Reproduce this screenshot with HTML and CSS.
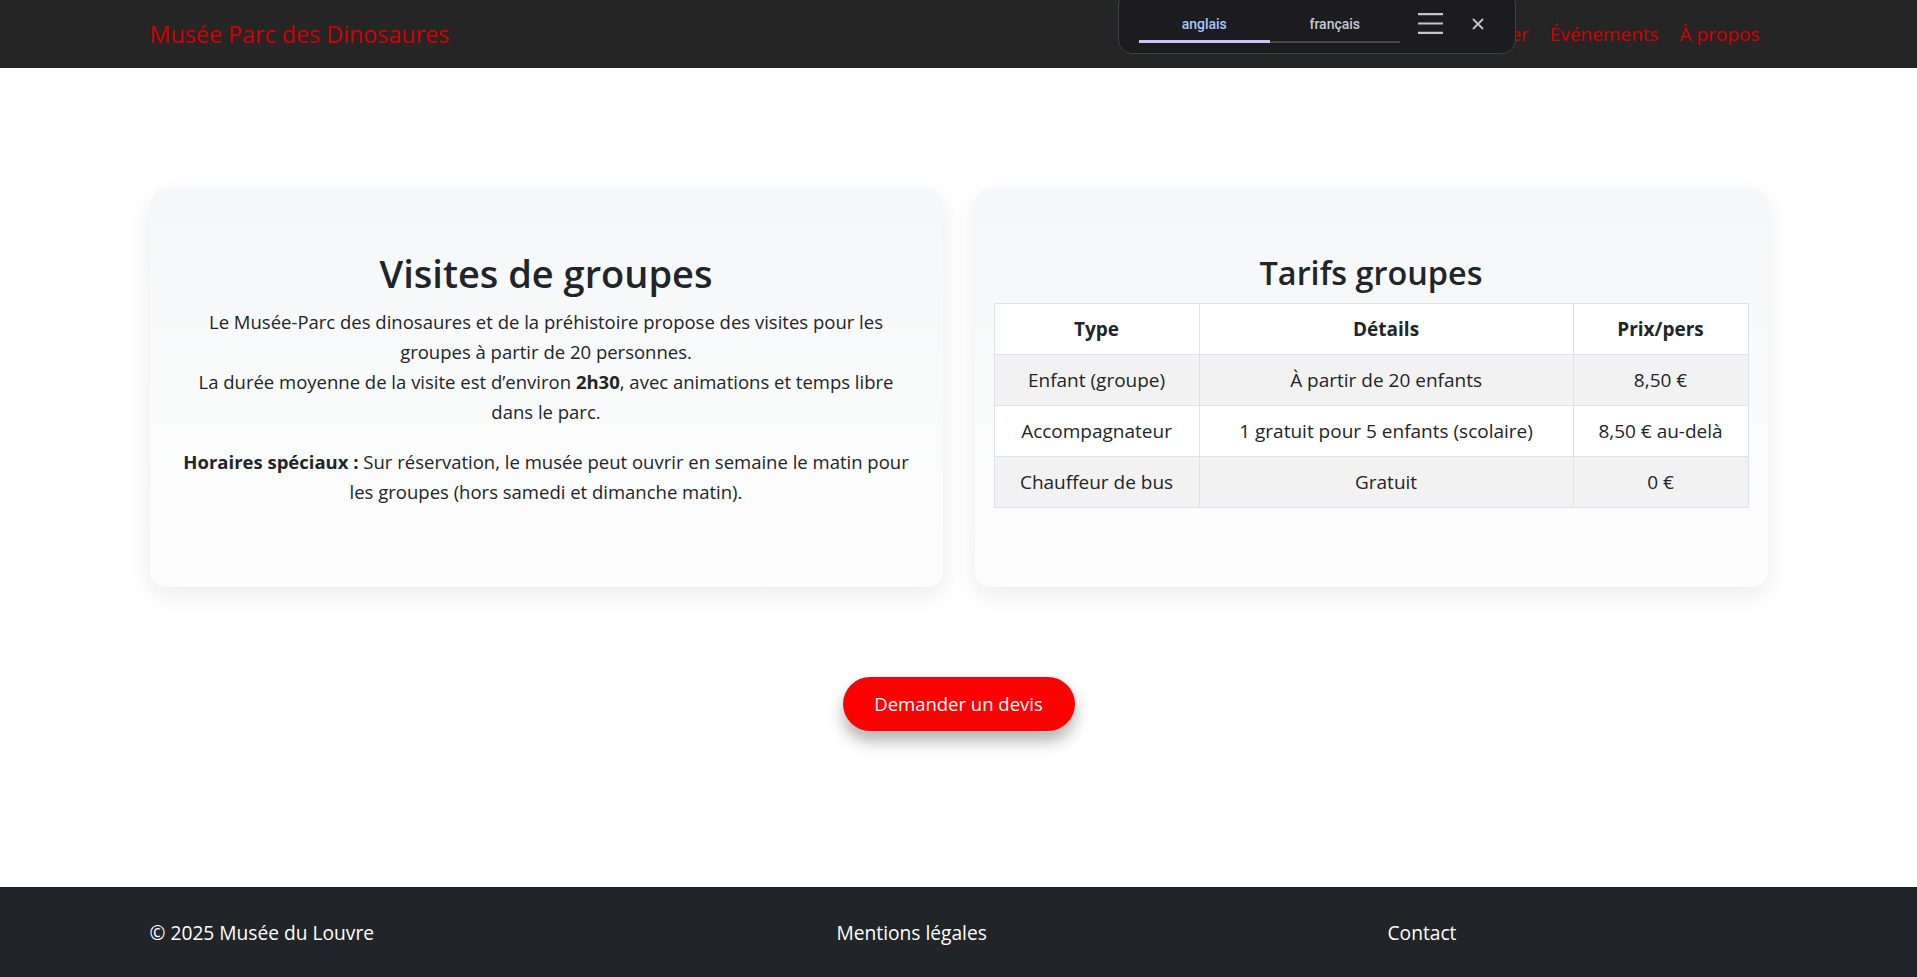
FILE: index.html
```html
<!DOCTYPE html>
<html lang="fr">
<head>
<meta charset="utf-8">
<title>Visites de groupes - Musée Parc des Dinosaures</title>
<link rel="stylesheet" href="styles.css">
</head>
<body>
<header class="navbar">
  <div class="nav-inner">
    <a class="brand" href="#">Musée Parc des Dinosaures</a>
    <ul class="nav-links">
      <li><a href="#">Accueil</a></li>
      <li><a href="#">Collections</a></li>
      <li><a href="#">Réserver</a></li>
      <li><a href="#">Événements</a></li>
      <li><a href="#">À propos</a></li>
    </ul>
  </div>
  <div class="translate-bar">
    <div class="tabs">
      <div class="tab active">anglais</div>
      <div class="tab">français</div>
    </div>
    <svg class="menu-icon" width="25" height="21" viewBox="0 0 25 21"><path d="M0 1.2h25M0 10.5h25M0 19.8h25" stroke="#c4c7c5" stroke-width="2.2"/></svg>
    <svg class="close-icon" width="12" height="12" viewBox="0 0 12 12"><path d="M1 1l10 10M11 1L1 11" stroke="#c4c7c5" stroke-width="1.8"/></svg>
  </div>
</header>

<main class="main">
  <div class="cards">
    <section class="card card-info">
      <h1 class="card-title">Visites de groupes</h1>
      <p class="card-text">Le Musée-Parc des dinosaures et de la préhistoire propose des visites pour les groupes à partir de 20 personnes.<br>La durée moyenne de la visite est d’environ <strong>2h30</strong>, avec animations et temps libre dans le parc.</p>
      <p class="card-text"><strong>Horaires spéciaux :</strong> Sur réservation, le musée peut ouvrir en semaine le matin pour les groupes (hors samedi et dimanche matin).</p>
    </section>
    <section class="card card-prices">
      <h2 class="card-title small">Tarifs groupes</h2>
      <table class="price-table">
        <thead>
          <tr><th class="col-type">Type</th><th class="col-details">Détails</th><th class="col-price">Prix/pers</th></tr>
        </thead>
        <tbody>
          <tr><td>Enfant (groupe)</td><td>À partir de 20 enfants</td><td>8,50 €</td></tr>
          <tr><td>Accompagnateur</td><td>1 gratuit pour 5 enfants (scolaire)</td><td>8,50 € au-delà</td></tr>
          <tr><td>Chauffeur de bus</td><td>Gratuit</td><td>0 €</td></tr>
        </tbody>
      </table>
    </section>
  </div>
  <div class="cta">
    <a class="btn-devis" href="#">Demander un devis</a>
  </div>
</main>

<footer class="footer">
  <div class="footer-inner">
    <span>© 2025 Musée du Louvre</span>
    <a href="#">Mentions légales</a>
    <a href="#">Contact</a>
  </div>
</footer>
</body>
</html>
```

FILE: styles.css
```css
* { box-sizing: border-box; }
html, body { margin: 0; padding: 0; }
body {
  font-family: "Open Sans", "Noto Sans", sans-serif;
  color: #212529;
  background: #fff;
  font-size: 18.5px;
  line-height: 30px;
}
a { text-decoration: none; }

.navbar {
  position: relative;
  height: 68px;
  background: #252525;
}
.nav-inner {
  width: 1620px;
  margin: 0 auto;
  height: 68px;
  display: flex;
  align-items: center;
  justify-content: space-between;
  padding-left: 1px;
}
.brand {
  color: #d10000;
  font-size: 23.3px;
  font-weight: 400;
  line-height: 30px;
}
.nav-links {
  list-style: none;
  margin: 0 -1.5px 0 0;
  padding: 0;
  display: flex;
}
.nav-links a {
  display: block;
  color: #d10000;
  font-size: 19px;
  padding: 0 10.5px;
  line-height: 30px;
}

.translate-bar {
  position: absolute;
  left: 1118px;
  top: -10px;
  width: 398px;
  height: 64px;
  background: #1c1b1f;
  border: 1px solid #3c4346;
  border-radius: 14px;
  display: flex;
  align-items: flex-start;
  padding: 13px 0 0 20px;
  font-family: Roboto, "Liberation Sans", sans-serif;
}
.tabs {
  display: flex;
  width: 261px;
  margin-top: 10px;
  border-bottom: 2px solid #444746;
}
.tab {
  flex: 1;
  text-align: center;
  font-size: 14px;
  font-weight: 500;
  line-height: 20px;
  padding: 0 0 6px;
  color: #c6c8d6;
  margin-bottom: -2px;
  border-bottom: 3px solid transparent;
}
.tab.active {
  color: #a8c7fa;
  border-bottom-color: #c2c5ff;
}
.menu-icon { margin: 9px 0 0 18px; }
.close-icon { margin: 14px 0 0 29px; }

.main {
  padding: 121px 0 156px;
}
.cards {
  width: 1618px;
  margin: 0 auto;
  display: grid;
  grid-template-columns: 1fr 1fr;
  gap: 32px;
}
.card {
  background: linear-gradient(to bottom, #f6f7f8, #fdfdfd);
  border-radius: 16px;
  box-shadow: 0 8px 24px rgba(0, 0, 0, 0.08);
  padding: 40px 20px;
  min-height: 398px;
  display: flex;
  flex-direction: column;
  justify-content: center;
  text-align: center;
}
.card-info { padding-left: 29px; padding-right: 29px; }
.card-prices { padding-left: 19px; padding-right: 19px; }
.card-title {
  margin: 0 0 10px;
  font-size: 38px;
  font-weight: 600;
  line-height: 48px;
}
.card-title.small {
  font-size: 32.4px;
  margin-bottom: 7px;
}
.card-text {
  margin: 0 0 20px;
  font-size: 18.5px;
  line-height: 30px;
}
.card-text strong { font-weight: 700; }

.price-table {
  width: 100%;
  border-collapse: collapse;
  margin-bottom: 20px;
  font-size: 19px;
  background: #fff;
}
.price-table th,
.price-table td {
  border: 1px solid #dee2e6;
  padding: 10px 8px;
  line-height: 30px;
  text-align: center;
}
.price-table th { font-weight: 700; }
.price-table tbody tr:nth-child(odd) td { background: #f2f2f2; }
.col-type { width: 27.2%; }
.col-details { width: 49.6%; }
.col-price { width: 23.2%; }

.cta {
  display: flex;
  justify-content: center;
  margin-top: 90px;
}
.btn-devis {
  display: flex;
  align-items: center;
  justify-content: center;
  width: 232px;
  height: 54px;
  border-radius: 27px;
  background: #ff0000;
  color: #fff;
  font-size: 18.5px;
  box-shadow: 0 10px 16px rgba(0, 0, 0, 0.3);
}

.footer {
  background: #212529;
  height: 90px;
  color: #fff;
}
.footer-inner {
  width: 1620px;
  margin: 0 auto;
  height: 90px;
  display: grid;
  grid-template-columns: 687px 551px 1fr;
  align-items: center;
  padding: 2px 0 0 1px;
  font-size: 19.2px;
}
.footer-inner a { color: #fff; }
```
